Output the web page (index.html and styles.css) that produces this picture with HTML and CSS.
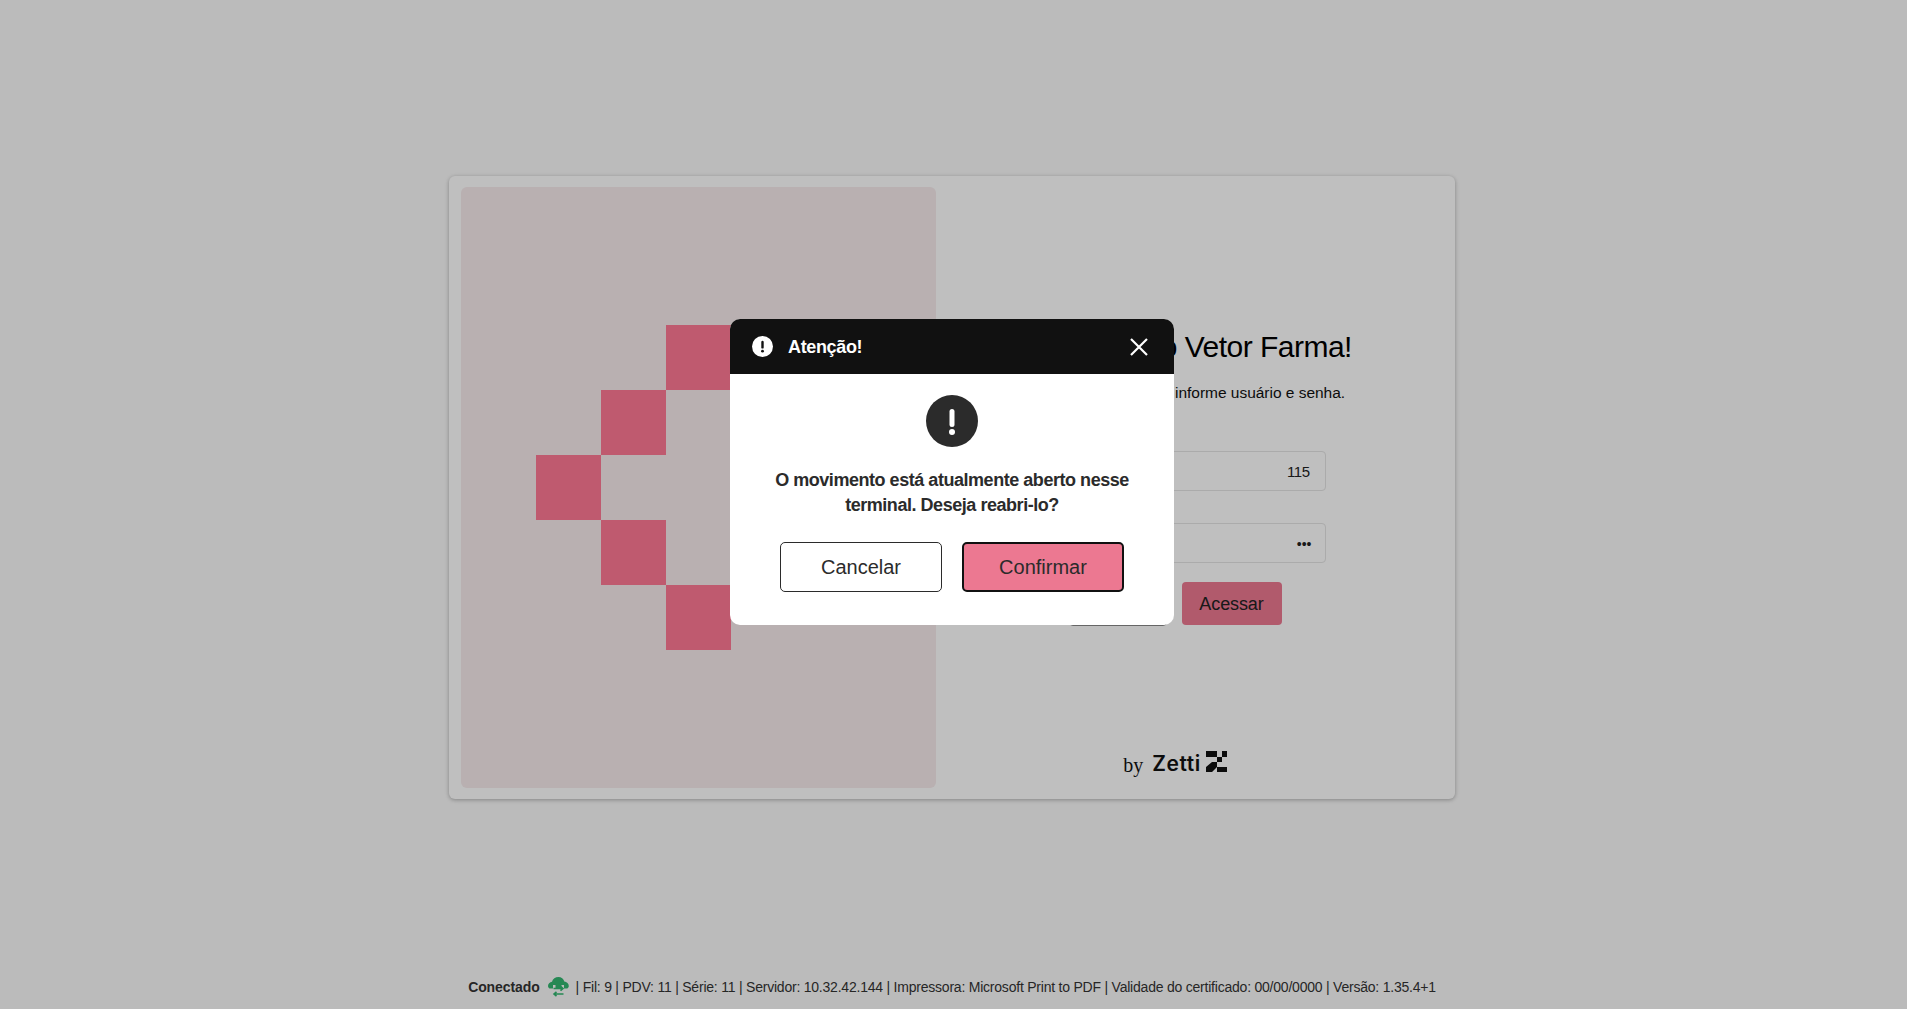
FILE: index.html
```html
<!DOCTYPE html>
<html lang="pt-BR">
<head>
<meta charset="utf-8">
<title>Vetor Farma</title>
<link rel="stylesheet" href="styles.css">
</head>
<body>
<main class="page">
  <section class="card">
    <div class="hero">
      <div class="pixels">
        <span class="px c3"></span>
        <span class="px c2"></span>
        <span class="px c1"></span>
        <span class="px c2"></span>
        <span class="px c3"></span>
      </div>
    </div>
    <div class="login">
      <div class="login-body">
        <h1 class="title">Bem-vindo ao Vetor Farma!</h1>
        <p class="subtitle">Para acessar o sistema, informe usuário e senha.</p>
        <div class="field">115</div>
        <div class="field dots">•••</div>
        <div class="actions">
          <button class="btn-ghost" type="button">Cancelar</button>
          <button class="btn-primary" type="button">Acessar</button>
        </div>
      </div>
      <div class="brand">
        <span class="by">by</span>
        <span class="zetti">Zetti</span>
        <svg class="zetti-mark" width="21" height="21" viewBox="0 0 21 21"><path fill="#111" d="M0 0h11v6H0zM16 0h5v6h-5zM11 6h5v5h-5zM0 21v-5l6-5h5v5l-5 5zM11 16h10v5H11z"/></svg>
      </div>
    </div>
  </section>
  <footer class="status">
    <strong class="status-label">Conectado</strong>
    <svg class="cloud" width="21" height="21" viewBox="0 0 21 21"><path fill="#33b670" d="M10.500 0c2.900 0 5.200 1.900 5.800 4.500 2.500.2 4.500 2.200 4.500 4.400 0 1.500-1 2.600-2.500 2.600H2.500C1 11.500 0 10.400 0 8.900c0-2 1.700-3.800 4-4.200C4.700 2 7.400 0 10.500 0z"/><rect x="5" y="8" width="11" height="13" fill="#fafafa"/><path fill="#33b670" d="M7.500 7h6v4h-6z"/><path fill="none" stroke="#33b670" stroke-width="1.600" d="M5.500 11.500h9.500M12.500 9.300l2.500 2.200-2.500 2.200M15.500 17h-9.500M8.500 14.800L6 17l2.500 2.200"/></svg>
    <span class="status-text">| Fil: 9 | PDV: 11 | Série: 11 | Servidor: 10.32.42.144 | Impressora: Microsoft Print to PDF | Validade do certificado: 00/00/0000 | Versão: 1.35.4+1</span>
  </footer>
</main>
<div class="backdrop">
  <div class="modal">
    <header class="modal-head">
      <svg class="head-icon" width="21" height="21" viewBox="0 0 21 21"><circle cx="10.500" cy="10.500" r="10.500" fill="#fff"/><rect x="9.300" y="4.800" width="2.400" height="7.800" rx="1.200" fill="#111"/><circle cx="10.500" cy="15.200" r="1.400" fill="#111"/></svg>
      <span class="modal-title">Atenção!</span>
      <svg class="close" width="18" height="18" viewBox="0 0 18 18"><path stroke="#fff" stroke-width="2.200" d="M1 1l16 16M17 1L1 17"/></svg>
    </header>
    <div class="modal-body">
      <svg class="big-icon" width="52" height="52" viewBox="0 0 52 52"><circle cx="26" cy="26" r="26" fill="#2b2b2b"/><rect x="23.500" y="14" width="5" height="18" rx="2.500" fill="#fff"/><circle cx="26" cy="37" r="3" fill="#fff"/></svg>
      <p class="message">O movimento está atualmente aberto nesse terminal. Deseja reabri-lo?</p>
      <div class="modal-actions">
        <button class="btn-cancel" type="button">Cancelar</button>
        <button class="btn-confirm" type="button">Confirmar</button>
      </div>
    </div>
  </div>
</div>
</body>
</html>
```
FILE: styles.css
```css
* { box-sizing: border-box; }
html, body { margin: 0; height: 100%; }
body { background: #fafafa; font-family: "Liberation Sans", Arial, sans-serif; color: #111; }
button { font-family: inherit; cursor: pointer; }

.page { height: 1009px; display: flex; flex-direction: column; align-items: center; padding: 176px 3px 0 0; }

.card { width: 1006px; height: 623px; flex: none; background: #fff; border-radius: 6px; padding: 11px 11px 11px 12px; display: flex; box-shadow: 0 1px 4px rgba(0,0,0,.3); }
.hero { width: 475px; height: 601px; background: #f7ebed; border-radius: 6px; padding: 138px 0 0 75px; }
.pixels { display: flex; flex-direction: column; align-items: flex-start; }
.px { display: block; width: 65px; height: 65px; background: #ff7995; }
.c2 { margin-left: 65px; }
.c3 { margin-left: 130px; }

.login { flex: 1; display: flex; flex-direction: column; align-items: center; padding-right: 30px; }
.login-body { display: flex; flex-direction: column; align-items: center; padding-top: 142px; width: 301px; }
.title { margin: 0; font-size: 30px; line-height: 36px; font-weight: 400; letter-spacing: -.52px; white-space: nowrap; color: #000; }
.subtitle { margin: 18px 0 0; font-size: 15.500px; line-height: 20px; letter-spacing: -.02px; white-space: nowrap; color: #111; }
.field { width: 301px; height: 40px; margin-top: 48px; padding: 1px 15px 0; border: 1px solid #e4e4e4; border-radius: 4px; font-size: 15px; letter-spacing: -.5px; line-height: 38px; text-align: right; color: #222; }
.dots { font-size: 14px; letter-spacing: 0; padding-right: 13px; }
.field + .field { margin-top: 32px; }
.actions { display: flex; align-items: flex-start; gap: 15px; margin-top: 19px; align-self: flex-start; padding-left: 44px; }
.btn-ghost { width: 98px; height: 44px; background: #fff; border: 1px solid #888; border-radius: 4px; font-size: 18px; }
.btn-primary { width: 100px; height: 43px; padding-top: 3px; background: #ec7891; border: 0; border-radius: 4px; font-size: 18px; letter-spacing: -.1px; color: #222; }

.brand { margin-top: auto; margin-bottom: 11px; display: flex; align-items: center; }
.by { font-family: "Liberation Serif", serif; font-size: 20px; margin: 4px 9px 0 0; }
.zetti { font-family: Inter, sans-serif; font-size: 21px; font-weight: 600; letter-spacing: .5px; margin-right: 5px; }
.zetti-mark { margin-top: -4px; }

.status { margin-top: auto; height: 36px; display: flex; align-items: center; gap: 8px; font-size: 14px; color: #333; white-space: nowrap; padding-bottom: 8px; }
.status-label { font-weight: 700; color: #333; letter-spacing: -.1px; }
.status-text { letter-spacing: -.22px; margin-left: -1px; }
.cloud { flex: none; }

.backdrop { position: fixed; inset: 0; background: rgba(0,0,0,.25); display: flex; align-items: flex-start; justify-content: center; padding: 319px 3px 0 0; }
.modal { width: 444px; height: 306px; background: #fff; border-radius: 10px; overflow: hidden; }
.modal-head { height: 55px; background: #111; color: #fff; display: flex; align-items: center; padding: 0 26px 0 22px; }
.modal-title { margin-left: 15px; font-size: 18px; font-weight: 700; letter-spacing: -.35px; position: relative; top: 1px; }
.close { margin-left: auto; }
.modal-body { display: flex; flex-direction: column; align-items: center; padding-top: 21px; }
.message { margin: 21px 0 0; width: 390px; text-align: center; font-size: 18px; line-height: 25px; font-weight: 700; letter-spacing: -.46px; color: #2b2b2b; }
.modal-actions { display: flex; gap: 20px; margin-top: 24px; }
.btn-cancel, .btn-confirm { width: 162px; height: 50px; border-radius: 5px; font-size: 20px; color: #2b2b2b; }
.btn-cancel { background: #fff; border: 1px solid #2b2b2b; padding-top: 2px; }
.btn-confirm { background: #ec7891; border: 2px solid #111; }
```
